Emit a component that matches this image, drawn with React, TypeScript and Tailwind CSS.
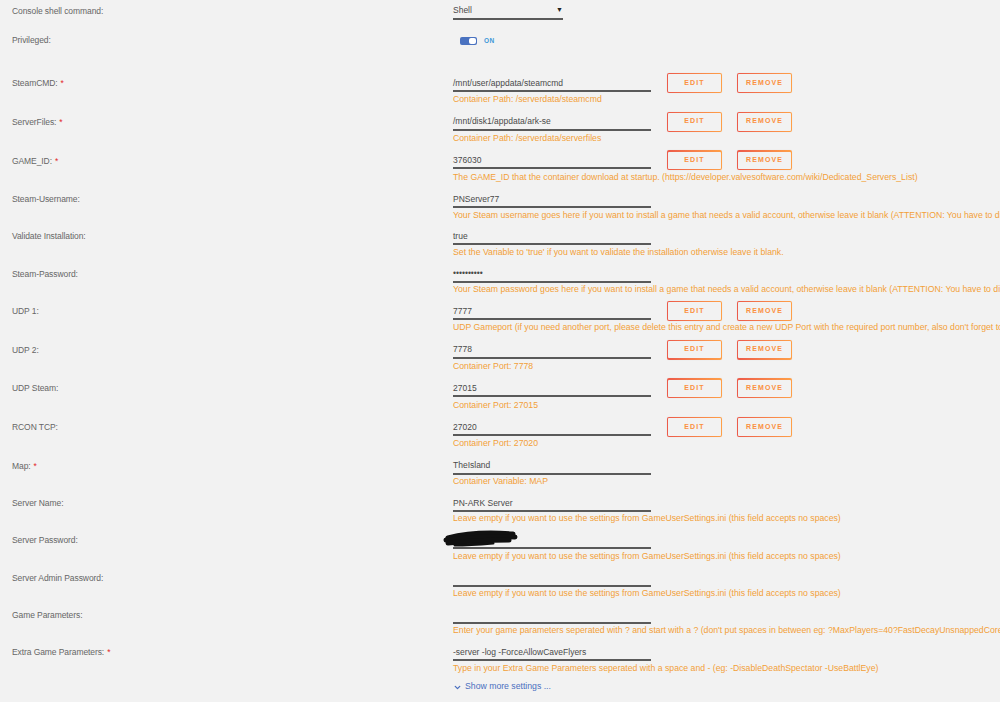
import { ChevronDown } from "lucide-react";

type Row = {
  label: string;
  req?: boolean;
  value: string;
  desc: string;
  buttons?: boolean;
  masked?: boolean;
};

const rows: Row[] = [
  { label: "SteamCMD:", req: true, value: "/mnt/user/appdata/steamcmd", desc: "Container Path: /serverdata/steamcmd", buttons: true },
  { label: "ServerFiles:", req: true, value: "/mnt/disk1/appdata/ark-se", desc: "Container Path: /serverdata/serverfiles", buttons: true },
  { label: "GAME_ID:", req: true, value: "376030", desc: "The GAME_ID that the container download at startup. (https://developer.valvesoftware.com/wiki/Dedicated_Servers_List)", buttons: true },
  { label: "Steam-Username:", value: "PNServer77", desc: "Your Steam username goes here if you want to install a game that needs a valid account, otherwise leave it blank (ATTENTION: You have to disable Steam Guard)" },
  { label: "Validate Installation:", value: "true", desc: "Set the Variable to 'true' if you want to validate the installation otherwise leave it blank." },
  { label: "Steam-Password:", value: "••••••••••", desc: "Your Steam password goes here if you want to install a game that needs a valid account, otherwise leave it blank (ATTENTION: You have to disable Steam Guard)" },
  { label: "UDP 1:", value: "7777", desc: "UDP Gameport (if you need another port, please delete this entry and create a new UDP Port with the required port number, also don't forget to change the port in the config)", buttons: true },
  { label: "UDP 2:", value: "7778", desc: "Container Port: 7778", buttons: true },
  { label: "UDP Steam:", value: "27015", desc: "Container Port: 27015", buttons: true },
  { label: "RCON TCP:", value: "27020", desc: "Container Port: 27020", buttons: true },
  { label: "Map:", req: true, value: "TheIsland", desc: "Container Variable: MAP" },
  { label: "Server Name:", value: "PN-ARK Server", desc: "Leave empty if you want to use the settings from GameUserSettings.ini (this field accepts no spaces)" },
  { label: "Server Password:", value: "", masked: true, desc: "Leave empty if you want to use the settings from GameUserSettings.ini (this field accepts no spaces)" },
  { label: "Server Admin Password:", value: "", desc: "Leave empty if you want to use the settings from GameUserSettings.ini (this field accepts no spaces)" },
  { label: "Game Parameters:", value: "", desc: "Enter your game parameters seperated with ? and start with a ? (don't put spaces in between eg: ?MaxPlayers=40?FastDecayUnsnappedCoreStructures=true)" },
  { label: "Extra Game Parameters:", req: true, value: "-server -log -ForceAllowCaveFlyers", desc: "Type in your Extra Game Parameters seperated with a space and - (eg: -DisableDeathSpectator -UseBattlEye)" },
];

function Btn({ text }: { text: string }) {
  return (
    <div className="w-[55px] h-[20px] rounded-[2px] bg-gradient-to-r from-[#ec5a4a] to-[#ffa048] p-[1.2px] shadow-[0_0_1px_rgba(0,0,0,0.12)]">
      <div className="w-full h-full rounded-[1px] bg-[#f2f2f2] flex items-center justify-center text-[7px] font-bold tracking-[0.16em] text-[#fb9040]">
        {text}
      </div>
    </div>
  );
}

function Label({ text, req }: { text: string; req?: boolean }) {
  return (
    <div className="w-[453px] shrink-0 pl-3 h-[19px] pt-[2px] flex items-center text-[#666] tracking-[-0.01em]">
      {text}
      {req && <span className="ml-[3px] text-[#e22828]">*</span>}
    </div>
  );
}

function Scribble() {
  return (
    <svg className="absolute left-[-10px] top-[0px]" width="76" height="18" viewBox="0 0 76 18">
      <g stroke="#111" strokeLinecap="round" fill="none">
        <path d="M5 8 C20 4, 45 2, 70 4" strokeWidth="5" />
        <path d="M3 10 C22 8, 48 6, 72 7" strokeWidth="5" />
        <path d="M5 13 C24 11, 46 10, 66 10" strokeWidth="5" />
        <path d="M12 15 C26 15, 38 14, 50 13" strokeWidth="3" />
      </g>
    </svg>
  );
}

function FieldRow({ row }: { row: Row }) {
  return (
    <div className={`flex ${row.buttons ? "h-[38.7px]" : "h-[37.3px]"}`}>
      <Label text={row.label} req={row.req} />
      <div className="flex flex-col">
        <div className="flex items-start">
          <div className="relative w-[198px] h-[19px] pt-[3px] border-b-2 border-[#5a5a5a] flex items-center text-[#4a4a4a]">
            {row.masked && <Scribble />}
            {row.value}
          </div>
          {row.buttons && (
            <div className="flex gap-[15px] ml-[16px]">
              <Btn text="EDIT" />
              <Btn text="REMOVE" />
            </div>
          )}
        </div>
        <div className="h-[14px] flex items-center whitespace-nowrap text-[8.7px] text-[#f2a038]">
          {row.desc}
        </div>
      </div>
    </div>
  );
}

export default function App() {
  return (
    <div className="w-[1000px] h-[702px] overflow-hidden bg-[#f2f2f2] text-[8.5px] font-['Liberation_Sans',Arial,sans-serif] pt-[1px]">
      <div className="flex h-[29px]">
        <Label text="Console shell command:" />
        <div className="w-[110px] h-[19px] pt-[2px] border-b-2 border-[#5a5a5a] flex items-center justify-between text-[#4a4a4a]">
          <span>Shell</span>
          <span className="text-[7px] text-[#222]">▼</span>
        </div>
      </div>
      <div className="flex h-[43px]">
        <Label text="Privileged:" />
        <div className="h-[19px] pt-[2px] flex items-center pl-[7px] gap-[7px]">
          <div className="w-[17px] h-[8px] rounded-[2px] bg-[#4a72c0] flex justify-end p-[1px]">
            <div className="w-[7px] h-full rounded-[2px] bg-white" />
          </div>
          <span className="text-[6.5px] font-bold text-[#3d98d8] tracking-[0.05em]">ON</span>
        </div>
      </div>
      {rows.map((r) => (
        <FieldRow key={r.label} row={r} />
      ))}
      <div className="flex">
        <div className="w-[453px] shrink-0" />
        <div className="flex items-center gap-[3px] text-[#4a6fbf] text-[8.7px] pt-[1px]">
          <ChevronDown size={9} strokeWidth={3.5} />
          <span>Show more settings ...</span>
        </div>
      </div>
    </div>
  );
}
